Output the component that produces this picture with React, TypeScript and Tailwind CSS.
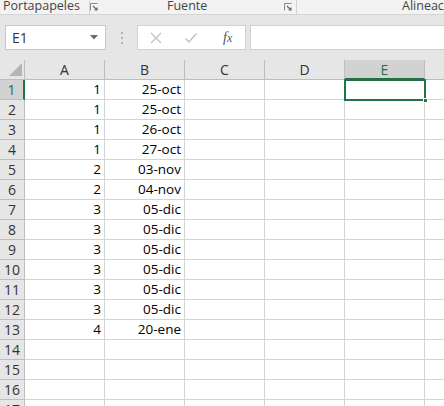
const rows: [string, string][] = [
  ["1", "25-oct"],
  ["1", "25-oct"],
  ["1", "26-oct"],
  ["1", "27-oct"],
  ["2", "03-nov"],
  ["2", "04-nov"],
  ["3", "05-dic"],
  ["3", "05-dic"],
  ["3", "05-dic"],
  ["3", "05-dic"],
  ["3", "05-dic"],
  ["3", "05-dic"],
  ["4", "20-ene"],
  ["", ""],
  ["", ""],
  ["", ""],
  ["", ""],
];

const cols = ["A", "B", "C", "D", "E"];

function Launcher() {
  return (
    <svg width="8" height="8" viewBox="0 0 8 8" className="shrink-0">
      <path d="M0.5 7.5V0.5H7.5" fill="none" stroke="#8a8a8a" strokeWidth="1" />
      <path d="M3 3L7 7M7 4.5V7H4.5" fill="none" stroke="#6a6a6a" strokeWidth="1.2" />
    </svg>
  );
}

export default function App() {
  return (
    <div className="w-[444px] h-[406px] overflow-hidden bg-white text-black font-['Open_Sans',sans-serif]">
      {/* ribbon group labels */}
      <div className="flex h-[15px] items-center overflow-hidden border-b border-[#d4d4d4] bg-[#f3f3f3] text-[12.5px] leading-none text-[#444]">
        <div className="flex h-full w-[90px] shrink-0 items-center border-r border-[#d4d4d4] pl-[3px]">
          <span className="-mt-[1px]">Portapapeles</span>
          <span className="ml-[10px]">
            <Launcher />
          </span>
        </div>
        <div className="relative flex h-full w-[207px] shrink-0 items-center border-r border-[#d4d4d4]">
          <span className="-mt-[1px] ml-[77px]">Fuente</span>
          <span className="absolute right-[4px] top-[3px]">
            <Launcher />
          </span>
        </div>
        <div className="flex h-full shrink-0 items-center pl-[105px]">
          <span className="-mt-[1px] whitespace-nowrap">Alineación</span>
        </div>
      </div>

      {/* formula bar */}
      <div className="flex h-[45px] items-center bg-[#e6e6e6] pl-[5px]">
        <div className="flex h-[25px] w-[101px] shrink-0 items-center justify-between border border-[#c6c6c6] bg-white pl-[6px] pr-[7px] text-[14px] text-[#333]">
          <span>E1</span>
          <svg width="8" height="5" viewBox="0 0 8 5">
            <path d="M0 0H8L4 4.5Z" fill="#6a6a6a" />
          </svg>
        </div>
        <div className="flex w-[31px] shrink-0 flex-col items-center gap-[3px]">
          <span className="h-[2px] w-[2px] bg-[#b0b0b0]" />
          <span className="h-[2px] w-[2px] bg-[#b0b0b0]" />
          <span className="h-[2px] w-[2px] bg-[#b0b0b0]" />
        </div>
        <div className="flex h-[25px] w-[109px] shrink-0 items-center border border-[#d0d0d0] bg-white">
          <svg width="14" height="14" viewBox="0 0 14 14" className="ml-[11px]">
            <path d="M2 2L12 12M12 2L2 12" stroke="#c4c4c4" strokeWidth="1.3" />
          </svg>
          <svg width="14" height="14" viewBox="0 0 14 14" className="ml-[21px]">
            <path d="M1.5 7.5L5 11L12.5 2.5" fill="none" stroke="#c4c4c4" strokeWidth="1.5" />
          </svg>
          <span className="ml-[25px] font-['Liberation_Serif',serif] text-[14px] italic text-[#555]">
            f<span className="text-[12px]">x</span>
          </span>
        </div>
        <div className="ml-[4px] h-[25px] flex-1 border border-[#d0d0d0] border-r-0 bg-white" />
      </div>

      {/* sheet */}
      <div className="relative">
        <div className="grid grid-cols-[25px_80px_80px_80px_80px_80px_80px] auto-rows-[20px]">
          <div className="relative border-b border-r border-[#bdbdbd] bg-[#e6e6e6]">
            <svg width="13" height="13" viewBox="0 0 13 13" className="absolute left-[9px] top-[3px]">
              <path d="M13 0V13H0Z" fill="#b4b4b4" />
            </svg>
          </div>
          {cols.map((c) => (
            <div
              key={c}
              className={
                c === "E"
                  ? "flex items-center justify-center border-b-2 border-r border-b-[#217346] border-r-[#bdbdbd] bg-[#d2d2d2] text-[14px] text-[#217346]"
                  : "flex items-center justify-center border-b border-r border-[#bdbdbd] bg-[#e6e6e6] text-[14px] text-[#333]"
              }
            >
              {c}
            </div>
          ))}
          <div className="border-b border-[#bdbdbd] bg-[#e6e6e6]" />

          {rows.map((r, i) => (
            <div key={i} className="contents">
              <div
                className={
                  i === 0
                    ? "flex items-center justify-center border-b border-r-2 border-b-[#bdbdbd] border-r-[#217346] bg-[#d2d2d2] text-[14px] text-[#217346]"
                    : "flex items-center justify-center border-b border-r border-[#bdbdbd] bg-[#e6e6e6] text-[14px] text-[#333]"
                }
              >
                {i + 1}
              </div>
              <div className="flex items-center justify-end border-b border-r border-[#d4d4d4] pr-[3px] text-[13.5px]">
                {r[0]}
              </div>
              <div className="flex items-center justify-end border-b border-r border-[#d4d4d4] pr-[3px] text-[13.5px]">
                {r[1]}
              </div>
              <div className="border-b border-r border-[#d4d4d4]" />
              <div className="border-b border-r border-[#d4d4d4]" />
              <div className="border-b border-r border-[#d4d4d4]" />
              <div className="border-b border-r border-[#d4d4d4]" />
            </div>
          ))}
        </div>

        {/* active cell E1 */}
        <div className="absolute left-[344px] top-[19px] h-[22px] w-[82px] border-2 border-[#217346]" />
        <div className="absolute left-[423px] top-[38px] h-[5px] w-[5px] border border-white bg-[#217346]" />
      </div>
    </div>
  );
}
